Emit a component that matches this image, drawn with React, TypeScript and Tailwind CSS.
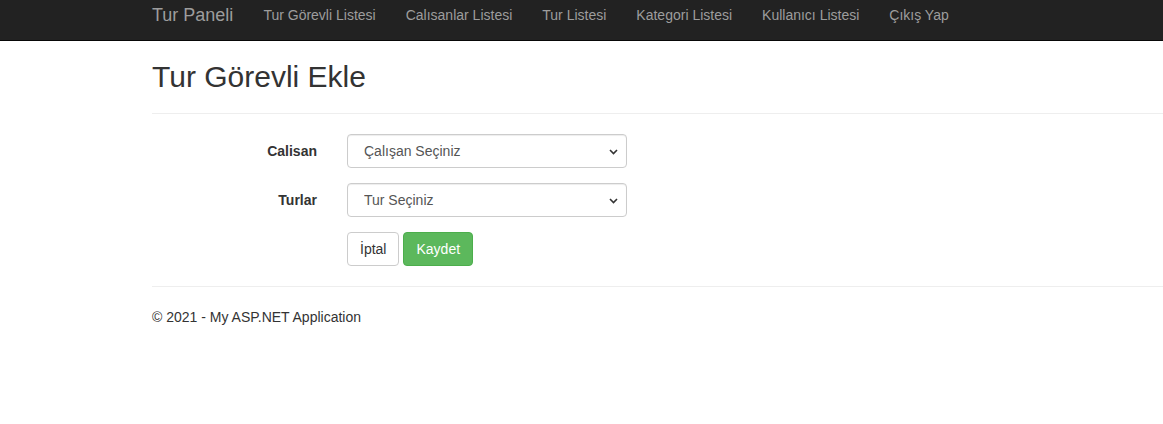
import React from 'react';

const navLinks = [
  'Tur Görevli Listesi',
  'Calısanlar Listesi',
  'Tur Listesi',
  'Kategori Listesi',
  'Kullanıcı Listesi',
  'Çıkış Yap',
];

const Chevron = () => (
  <svg width="9" height="6" viewBox="0 0 9 6" className="absolute right-[9px] top-[15px] pointer-events-none">
    <polyline points="1,1 4.5,4.5 8,1" fill="none" stroke="#333" strokeWidth="1.6" />
  </svg>
);

const SelectRow = ({ label, placeholder }: { label: string; placeholder: string }) => (
  <div className="flex mb-[15px]">
    <label className="w-[165px] pt-[7px] text-right font-bold text-[14px] leading-[20px]">{label}</label>
    <div className="pl-[30px]">
      <div className="relative w-[280px]">
        <select className="appearance-none w-full h-[34px] pl-[16px] pr-[24px] text-[14px] text-[#555] bg-white border border-[#ccc] rounded-[4px] shadow-[inset_0_1px_1px_rgba(0,0,0,0.075)] outline-none">
          <option>{placeholder}</option>
        </select>
        <Chevron />
      </div>
    </div>
  </div>
);

export default function App() {
  return (
    <div className="w-full min-h-[424px] overflow-hidden bg-white text-[#333] text-[14px] leading-[20px] font-['Liberation_Sans',Arial,sans-serif]">
      {/* navbar */}
      <div className="box-border h-[41px] bg-[#222] border-b border-[#080808]">
        <div className="w-[1170px] ml-[137px] px-[15px] pt-[5px] flex items-start">
          <span className="text-[18px] leading-[20px] text-[#9d9d9d] pr-[15px]">Tur Paneli</span>
          {navLinks.map(l => (
            <span key={l} className="px-[15px] text-[14px] leading-[20px] text-[#9d9d9d]">{l}</span>
          ))}
        </div>
      </div>

      <div className="w-[1170px] ml-[137px] px-[15px]">
        <h2 className="mt-[19px] text-[30px] leading-[33px] font-normal">Tur Görevli Ekle</h2>
        <hr className="mt-[20px] mb-[20px] border-t border-[#eee]" />

        <SelectRow label="Calisan" placeholder="Çalışan Seçiniz" />
        <SelectRow label="Turlar" placeholder="Tur Seçiniz" />

        <div className="flex">
          <div className="w-[195px]" />
          <div className="flex gap-[4px]">
            <button className="h-[34px] px-[12px] bg-white border border-[#ccc] rounded-[4px] text-[14px] text-[#333]">İptal</button>
            <button className="h-[34px] px-[12px] bg-[#5cb85c] border border-[#4cae4c] rounded-[4px] text-[14px] text-white">Kaydet</button>
          </div>
        </div>

        <hr className="mt-[20px] mb-[20px] border-t border-[#eee]" />
        <p>© 2021 - My ASP.NET Application</p>
      </div>
    </div>
  );
}
